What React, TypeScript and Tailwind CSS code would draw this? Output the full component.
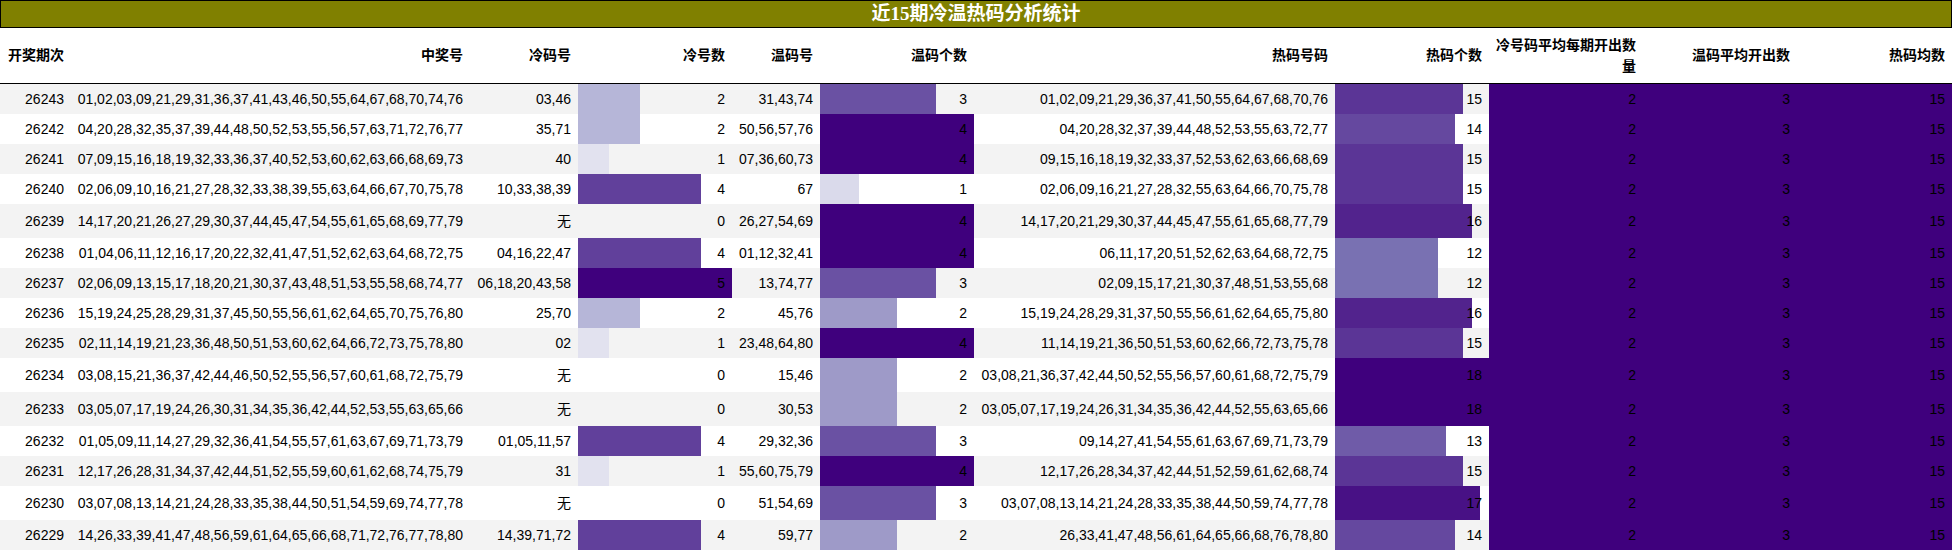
type Row = {
  issue: string;
  win: string;
  cold: string;
  coldN: number;
  warm: string;
  warmN: number;
  hot: string;
  hotN: number;
};

const ROWS: Row[] = [
  { issue: "26243", win: "01,02,03,09,21,29,31,36,37,41,43,46,50,55,64,67,68,70,74,76", cold: "03,46", coldN: 2, warm: "31,43,74", warmN: 3, hot: "01,02,09,21,29,36,37,41,50,55,64,67,68,70,76", hotN: 15 },
  { issue: "26242", win: "04,20,28,32,35,37,39,44,48,50,52,53,55,56,57,63,71,72,76,77", cold: "35,71", coldN: 2, warm: "50,56,57,76", warmN: 4, hot: "04,20,28,32,37,39,44,48,52,53,55,63,72,77", hotN: 14 },
  { issue: "26241", win: "07,09,15,16,18,19,32,33,36,37,40,52,53,60,62,63,66,68,69,73", cold: "40", coldN: 1, warm: "07,36,60,73", warmN: 4, hot: "09,15,16,18,19,32,33,37,52,53,62,63,66,68,69", hotN: 15 },
  { issue: "26240", win: "02,06,09,10,16,21,27,28,32,33,38,39,55,63,64,66,67,70,75,78", cold: "10,33,38,39", coldN: 4, warm: "67", warmN: 1, hot: "02,06,09,16,21,27,28,32,55,63,64,66,70,75,78", hotN: 15 },
  { issue: "26239", win: "14,17,20,21,26,27,29,30,37,44,45,47,54,55,61,65,68,69,77,79", cold: "无", coldN: 0, warm: "26,27,54,69", warmN: 4, hot: "14,17,20,21,29,30,37,44,45,47,55,61,65,68,77,79", hotN: 16 },
  { issue: "26238", win: "01,04,06,11,12,16,17,20,22,32,41,47,51,52,62,63,64,68,72,75", cold: "04,16,22,47", coldN: 4, warm: "01,12,32,41", warmN: 4, hot: "06,11,17,20,51,52,62,63,64,68,72,75", hotN: 12 },
  { issue: "26237", win: "02,06,09,13,15,17,18,20,21,30,37,43,48,51,53,55,58,68,74,77", cold: "06,18,20,43,58", coldN: 5, warm: "13,74,77", warmN: 3, hot: "02,09,15,17,21,30,37,48,51,53,55,68", hotN: 12 },
  { issue: "26236", win: "15,19,24,25,28,29,31,37,45,50,55,56,61,62,64,65,70,75,76,80", cold: "25,70", coldN: 2, warm: "45,76", warmN: 2, hot: "15,19,24,28,29,31,37,50,55,56,61,62,64,65,75,80", hotN: 16 },
  { issue: "26235", win: "02,11,14,19,21,23,36,48,50,51,53,60,62,64,66,72,73,75,78,80", cold: "02", coldN: 1, warm: "23,48,64,80", warmN: 4, hot: "11,14,19,21,36,50,51,53,60,62,66,72,73,75,78", hotN: 15 },
  { issue: "26234", win: "03,08,15,21,36,37,42,44,46,50,52,55,56,57,60,61,68,72,75,79", cold: "无", coldN: 0, warm: "15,46", warmN: 2, hot: "03,08,21,36,37,42,44,50,52,55,56,57,60,61,68,72,75,79", hotN: 18 },
  { issue: "26233", win: "03,05,07,17,19,24,26,30,31,34,35,36,42,44,52,53,55,63,65,66", cold: "无", coldN: 0, warm: "30,53", warmN: 2, hot: "03,05,07,17,19,24,26,31,34,35,36,42,44,52,55,63,65,66", hotN: 18 },
  { issue: "26232", win: "01,05,09,11,14,27,29,32,36,41,54,55,57,61,63,67,69,71,73,79", cold: "01,05,11,57", coldN: 4, warm: "29,32,36", warmN: 3, hot: "09,14,27,41,54,55,61,63,67,69,71,73,79", hotN: 13 },
  { issue: "26231", win: "12,17,26,28,31,34,37,42,44,51,52,55,59,60,61,62,68,74,75,79", cold: "31", coldN: 1, warm: "55,60,75,79", warmN: 4, hot: "12,17,26,28,34,37,42,44,51,52,59,61,62,68,74", hotN: 15 },
  { issue: "26230", win: "03,07,08,13,14,21,24,28,33,35,38,44,50,51,54,59,69,74,77,78", cold: "无", coldN: 0, warm: "51,54,69", warmN: 3, hot: "03,07,08,13,14,21,24,28,33,35,38,44,50,59,74,77,78", hotN: 17 },
  { issue: "26229", win: "14,26,33,39,41,47,48,56,59,61,64,65,66,68,71,72,76,77,78,80", cold: "14,39,71,72", coldN: 4, warm: "59,77", warmN: 2, hot: "26,33,41,47,48,56,61,64,65,66,68,76,78,80", hotN: 14 },
];

// Purples colormap, sampled per value
const COLD_COLORS: Record<number, string> = { 1: "#e2e2ef", 2: "#b6b6d8", 3: "#8a87bf", 4: "#61409b", 5: "#3f007d" };
const WARM_COLORS: Record<number, string> = { 1: "#dadaeb", 2: "#9e9ac8", 3: "#6a51a3", 4: "#3f007d" };
const HOT_COLORS: Record<number, string> = {
  12: "#7971b2", 13: "#6f5ba8", 14: "#65489f", 15: "#5b3596", 16: "#52238d", 17: "#481185", 18: "#3f007d",
};

const GRID =
  "grid grid-cols-[71px_399px_108px_154px_88px_154px_361px_154px_154px_154px_155px]";

const HEADERS = [
  "开奖期次", "中奖号", "冷码号", "冷号数", "温码号", "温码个数", "热码号码", "热码个数",
  "冷号码平均每期开出数量", "温码平均开出数", "热码均数",
];

function Cell({ children }: { children: React.ReactNode }) {
  return <div className="flex items-center justify-end whitespace-nowrap pr-[7px]">{children}</div>;
}

function BarCell({ value, max, color }: { value: number; max: number; color?: string }) {
  return (
    <div className="relative flex items-center justify-end pr-[7px]">
      {value > 0 && (
        <div
          className="absolute inset-y-0 left-0"
          style={{ width: `${(value / max) * 154}px`, backgroundColor: color }}
        />
      )}
      <span className="relative">{value}</span>
    </div>
  );
}

function DarkCell({ children }: { children: React.ReactNode }) {
  return <div className="flex items-center justify-end bg-[#3f007d] pr-[7px]">{children}</div>;
}

export default function App() {
  return (
    <div className="w-[1952px] bg-white font-['Liberation_Sans','Noto_Sans_CJK_SC',sans-serif] text-[14px] text-black">
      <div className="flex h-[28px] items-center justify-center border border-black bg-[#808000] font-['Liberation_Serif','Noto_Sans_CJK_SC',serif] text-[19px] font-bold text-white">
        近15期冷温热码分析统计
      </div>

      <div className={`${GRID} h-[56px] border-b border-black font-bold leading-[21px]`}>
        {HEADERS.map((h) => (
          <div key={h} className="flex items-center justify-end pr-[7px] text-right">
            {h}
          </div>
        ))}
      </div>

      {ROWS.map((r, i) => (
        <div
          key={r.issue}
          className={`${GRID} ${r.coldN === 0 ? "h-[34px]" : "h-[30px]"} ${i % 2 === 0 ? "bg-[#f3f3f3]" : "bg-white"}`}
        >
          <Cell>{r.issue}</Cell>
          <Cell>{r.win}</Cell>
          <Cell>{r.cold}</Cell>
          <BarCell value={r.coldN} max={5} color={COLD_COLORS[r.coldN]} />
          <Cell>{r.warm}</Cell>
          <BarCell value={r.warmN} max={4} color={WARM_COLORS[r.warmN]} />
          <Cell>{r.hot}</Cell>
          <BarCell value={r.hotN} max={18} color={HOT_COLORS[r.hotN]} />
          <DarkCell>2</DarkCell>
          <DarkCell>3</DarkCell>
          <DarkCell>15</DarkCell>
        </div>
      ))}
    </div>
  );
}
